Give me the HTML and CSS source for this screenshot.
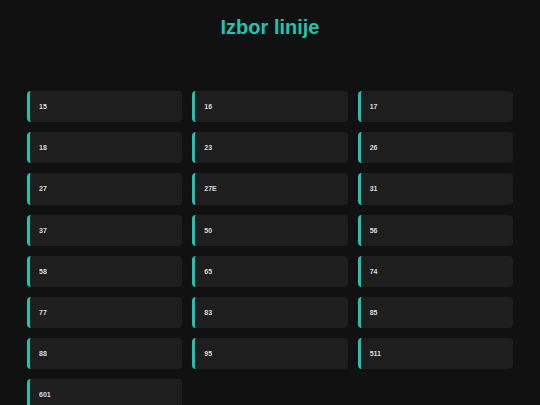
FILE: index.html
```html
<!DOCTYPE html>
<html lang="hr">

<head>
  <meta charset="UTF-8">
  <meta name="viewport" content="width=device-width, initial-scale=1.0">
  <title>Izbor linije</title>
  <link rel="stylesheet" href="styles.css">
</head>

<body>
  <div class="container">
    <h1>Izbor linije</h1>

    <!-- Popis linija -->
    <div class="linije">
      <div class="linija">15</div>
      <div class="linija">16</div>
      <div class="linija">17</div>
      <div class="linija">18</div>
      <div class="linija">23</div>
      <div class="linija">26</div>
      <div class="linija">27</div>
      <div class="linija">27E</div>
      <div class="linija">31</div>
      <div class="linija">37</div>
      <div class="linija">50</div>
      <div class="linija">56</div>
      <div class="linija">58</div>
      <div class="linija">65</div>
      <div class="linija">74</div>
      <div class="linija">77</div>
      <div class="linija">83</div>
      <div class="linija">85</div>
      <div class="linija">88</div>
      <div class="linija">95</div>
      <div class="linija">511</div>
      <div class="linija">601</div>
    </div>
  </div>
</body>

</html>
```

FILE: styles.css
```css
body {
  margin: 0;
  font-family: "Liberation Sans", Arial, sans-serif;
  background: #111111;
  color: #dddddd;
}

.container {
  padding: 15px 27px 20px;
}

h1 {
  margin: 0 0 52px;
  font-size: 20px;
  line-height: 24px;
  text-align: center;
  color: #1ec4b0;
}

.linije {
  display: grid;
  grid-template-columns: repeat(3, 1fr);
  gap: 10px;
}

.linija {
  background: #1e1e1e;
  border-left: 3px solid #1ec4b0;
  border-radius: 4px;
  padding: 11.1px 9px;
  font-size: 7px;
  line-height: 9px;
  font-weight: bold;
  color: #dcdcdc;
  cursor: pointer;
}

.linija:hover {
  background: #262626;
}
```
